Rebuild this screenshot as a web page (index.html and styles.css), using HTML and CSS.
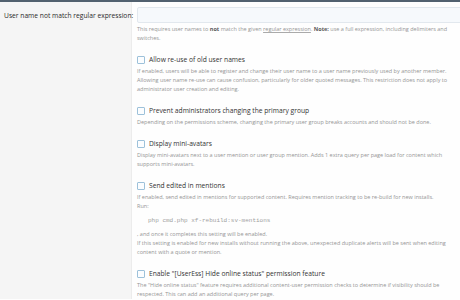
FILE: index.html
```html
<!DOCTYPE html>
<html lang="en">

<head>
    <meta charset="UTF-8">
    <meta name="viewport" content="width=device-width, initial-scale=1.0">
    <title>Options</title>
    <link rel="stylesheet" href="styles.css">
</head>

<body>
    <div class="top-bar"></div>

    <div class="form">
        <div class="row">
            <div class="row-label">User name not match regular expression:</div>
            <div class="row-input">
                <input class="text-input" type="text">
                <div class="hint">This requires user names to <b>not</b> match the given <u>regular expression</u>. <b>Note:</b> use a full expression, including delimiters and switches.</div>
            </div>
        </div>

        <div class="row">
            <div class="row-label"></div>
            <div class="row-input">
                <label class="check"><span class="box"></span>Allow re-use of old user names</label>
                <div class="hint">If enabled, users will be able to register and change their user name to a user name previously used by another member. Allowing user name re-use can cause confusion, particularly for older quoted messages. This restriction does not apply to administrator user creation and editing.</div>
            </div>
        </div>

        <div class="row">
            <div class="row-label"></div>
            <div class="row-input">
                <label class="check"><span class="box"></span>Prevent administrators changing the primary group</label>
                <div class="hint">Depending on the permissions scheme, changing the primary user group breaks accounts and should not be done.</div>
            </div>
        </div>

        <div class="row">
            <div class="row-label"></div>
            <div class="row-input">
                <label class="check"><span class="box"></span>Display mini-avatars</label>
                <div class="hint">Display mini-avatars next to a user mention or user group mention. Adds 1 extra query per page load for content which supports mini-avatars.</div>
            </div>
        </div>

        <div class="row">
            <div class="row-label"></div>
            <div class="row-input">
                <label class="check"><span class="box"></span>Send edited in mentions</label>
                <div class="hint">If enabled, send edited in mentions for supported content. Requires mention tracking to be re-build for new installs.<br>Run:
                    <pre class="code">php cmd.php xf-rebuild:sv-mentions</pre>
                    , and once it completes this setting will be enabled.<br>
                    If this setting is enabled for new installs without running the above, unexpected duplicate alerts will be sent when editing content with a quote or mention.
                </div>
            </div>
        </div>

        <div class="row">
            <div class="row-label"></div>
            <div class="row-input">
                <label class="check"><span class="box"></span>Enable "[UserEss] Hide online status" permission feature</label>
                <div class="hint">The "Hide online status" feature requires additional content-user permission checks to determine if visibility should be respected. This can add an additional query per page.</div>
            </div>
        </div>
    </div>
</body>

</html>
```

FILE: styles.css
```css
body {
    margin: 0;
    font-family: "Open Sans", "Noto Sans", sans-serif;
    background-color: #fefefe;
    color: #141414;
    overflow: hidden;
}

.top-bar {
    height: 2px;
    background-color: #52616f;
}

.form {
    display: flex;
    flex-direction: column;
}

.row {
    display: grid;
    grid-template-columns: 132px 1fr;
}

.row-label {
    background-color: #f5f5f5;
    border-right: 1px solid #ececec;
    font-size: 6.7px;
    line-height: 11px;
    white-space: nowrap;
    color: #2a2a2a;
    padding: 7.5px 4px 0 4px;
}

.row-input {
    padding: 0 2px 0 5px;
}

.row:first-child .row-input {
    padding-top: 5px;
}

.text-input {
    display: block;
    box-sizing: border-box;
    width: calc(100% + 20px);
    height: 16px;
    margin: 0;
    background-color: #f6f9fc;
    border: 1px solid #e2e8ee;
    border-radius: 2px;
}

.hint {
    font-size: 5.5px;
    line-height: 9px;
    color: #959595;
    margin-top: 2px;
}

.hint b {
    color: #5a5a5a;
}

.hint u {
    text-decoration-color: #aaa;
}

.check {
    display: flex;
    align-items: center;
    gap: 4px;
    font-size: 6.7px;
    line-height: 11px;
    color: #333;
    margin-top: 11px;
}

.box {
    width: 6px;
    height: 6px;
    border: 1px solid #9dc1da;
    border-radius: 1px;
    background: #fbfdff;
}

.code {
    font-family: "Liberation Mono", monospace;
    font-size: 6px;
    line-height: 9px;
    margin: 0;
    padding: 5px 11px;
    color: #a0a0a0;
}
```
